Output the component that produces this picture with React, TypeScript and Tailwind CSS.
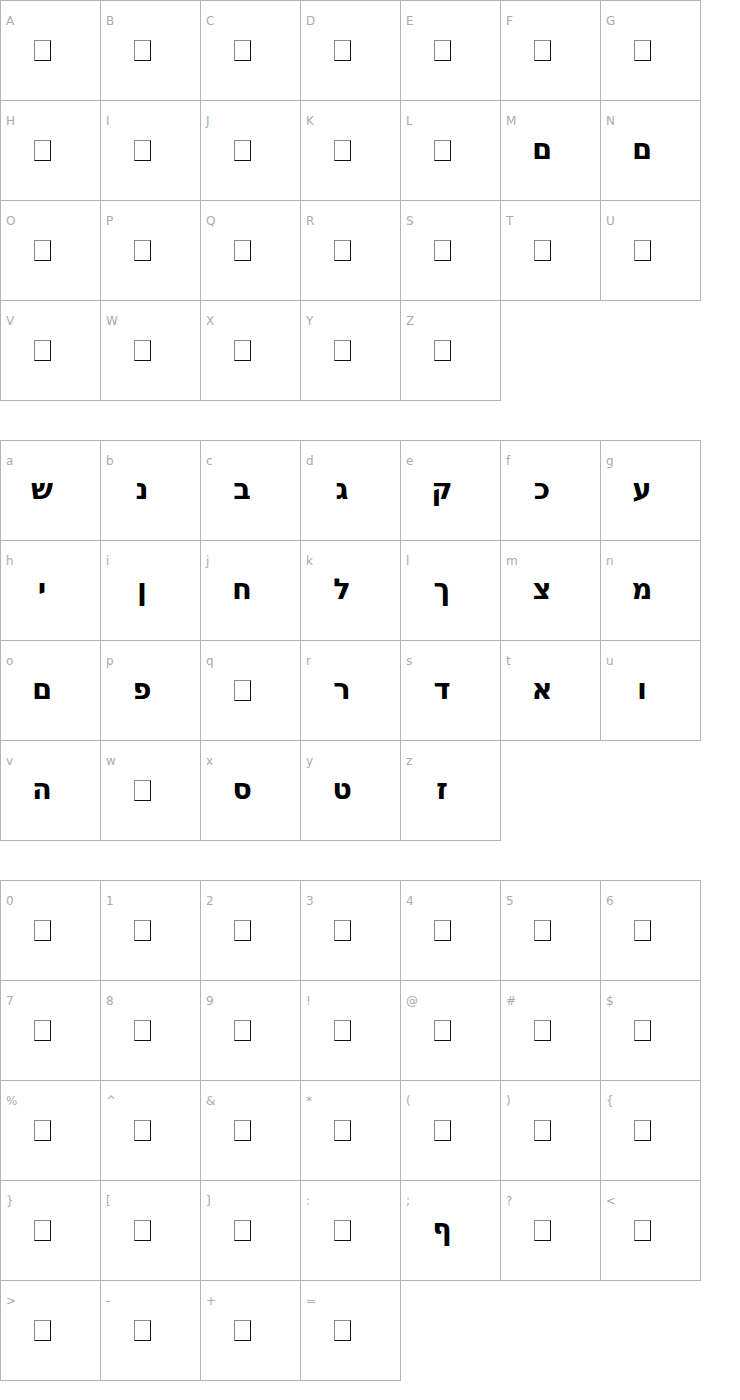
import React from "react";

type Glyph = { label: string; char?: string };

// no char = missing glyph (tofu box)
const upper: Glyph[] = "ABCDEFGHIJKLMNOPQRSTUVWXYZ".split("").map((l) => ({
  label: l,
  char: l === "M" || l === "N" ? "ם" : undefined,
}));

const hebrew: Record<string, string> = {
  a: "ש", b: "נ", c: "ב", d: "ג", e: "ק", f: "כ", g: "ע",
  h: "י", i: "ן", j: "ח", k: "ל", l: "ך", m: "צ", n: "מ",
  o: "ם", p: "פ", r: "ר", s: "ד", t: "א", u: "ו",
  v: "ה", x: "ס", y: "ט", z: "ז",
};

const lower: Glyph[] = "abcdefghijklmnopqrstuvwxyz".split("").map((l) => ({
  label: l,
  char: hebrew[l],
}));

const symbols: Glyph[] = [
  "0", "1", "2", "3", "4", "5", "6",
  "7", "8", "9", "!", "@", "#", "$",
  "%", "^", "&", "*", "(", ")", "{",
  "}", "[", "]", ":", ";", "?", "<",
  ">", "-", "+", "=",
].map((l) => ({ label: l, char: l === ";" ? "ף" : undefined }));

const Cell: React.FC<{ g: Glyph }> = ({ g }) => (
  <div className="w-[101px] h-[101px] -mr-px -mb-px border border-[#b4b4b4] flex flex-col bg-white">
    <div className="mt-[13px] ml-[5px] text-[12px] leading-[14px] text-[#ababab] font-['DejaVu_Sans',sans-serif]">
      {g.label}
    </div>
    {g.char ? (
      <div
        dir="rtl"
        className="mt-[7px] w-[82px] text-center text-[29px] leading-[28px] font-bold text-black font-['DejaVu_Sans',sans-serif]"
      >
        {g.char}
      </div>
    ) : (
      <div className="mt-[12px] ml-[33px] w-[17px] h-[21px] border border-t-[#8a8a8a] border-l-[#8a8a8a] border-r-[#111] border-b-[#111]" />
    )}
  </div>
);

const Block: React.FC<{ items: Glyph[] }> = ({ items }) => (
  <div className="w-[701px] flex flex-wrap content-start">
    {items.map((g, i) => (
      <Cell key={i} g={g} />
    ))}
  </div>
);

export default function App() {
  return (
    <div className="w-[740px] min-h-[1400px] bg-white">
      <Block items={upper} />
      <div className="mt-10">
        <Block items={lower} />
      </div>
      <div className="mt-10">
        <Block items={symbols} />
      </div>
    </div>
  );
}
